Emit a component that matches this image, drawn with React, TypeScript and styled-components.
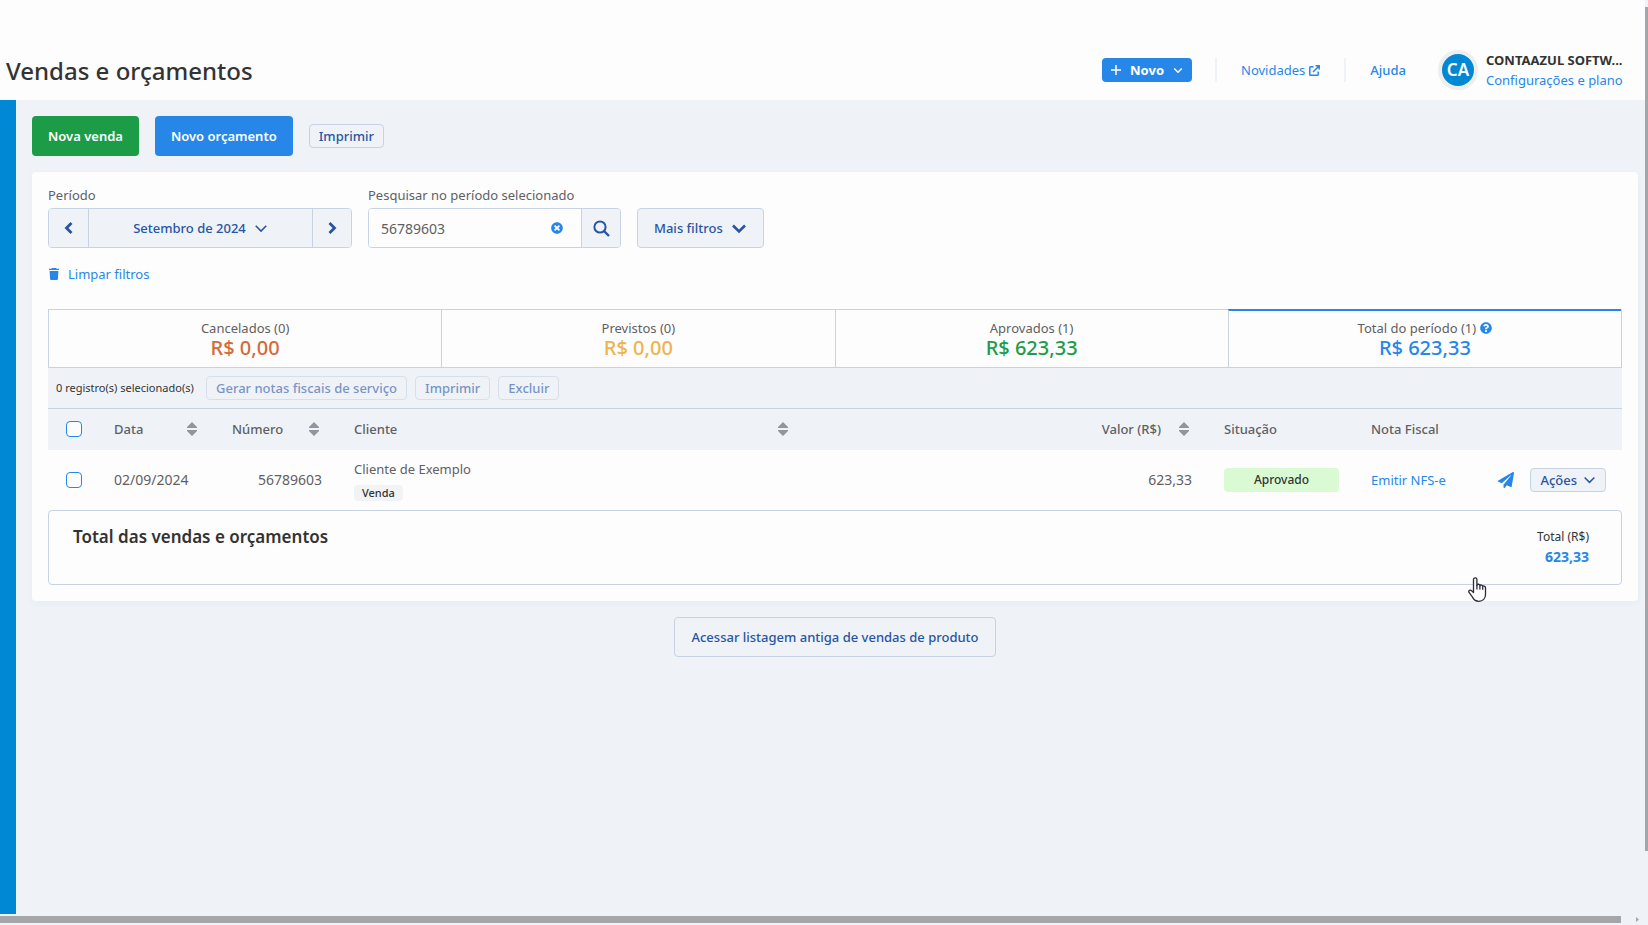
import React from 'react';
import styled, { createGlobalStyle, css } from 'styled-components';
import { FaPaperPlane, FaTimesCircle, FaQuestionCircle } from 'react-icons/fa';

const color = {
  surface: '#fdfdfd',
  page: '#eff3f8',
  border: '#c7d3e2',
  brand: '#0088d4',
  blue: '#2687e9',
  navy: '#2855a3',
  green: '#1d9c48',
  text: '#333333',
  muted: '#5f5f64',
};

const GlobalStyle = createGlobalStyle`
  *, *::before, *::after { box-sizing: border-box; }
  body {
    margin: 0;
    background: ${color.page};
    color: ${color.text};
    font: 400 13px/20px "Noto Sans", "Open Sans", sans-serif;
    overflow: hidden;
  }
  button, input { font: inherit; margin: 0; }
  button { cursor: pointer; }
  a { text-decoration: none; color: ${color.blue}; }
  h1, h2, p { margin: 0; }
  svg { display: block; flex: none; }
`;

/* ---------- Frame ---------- */

const Frame = styled.div`
  display: grid;
  grid-template: minmax(0, 1fr) 11px / minmax(0, 1fr) 3px;
  height: 100vh;
`;

const Screen = styled.div`
  display: flex;
  flex-direction: column;
  min-height: 0;
`;

const VerticalTrack = styled.div`
  display: flex;
  flex-direction: column;
  padding-top: 7px;
`;

const VerticalThumb = styled.div`
  height: 93%;
  background: #a4a6aa;
`;

const HorizontalTrack = styled.div`
  grid-column: 1 / -1;
  display: flex;
  align-items: center;
  justify-content: space-between;
  padding-right: 9px;
`;

const HorizontalThumb = styled.div`
  flex: 1;
  height: 7px;
  margin-right: 15px;
  background: #a4a6aa;
`;

/* ---------- Header ---------- */

const Header = styled.header`
  display: flex;
  align-items: flex-end;
  justify-content: space-between;
  height: 100px;
  padding: 0 17px 10px 6px;
  background: ${color.surface};
`;

const PageTitle = styled.h1`
  font-size: 24px;
  line-height: 38px;
  font-weight: 500;
`;

const HeaderNav = styled.nav`
  display: flex;
  align-items: center;
  height: 40px;
`;

const NewButton = styled.button`
  display: flex;
  align-items: center;
  gap: 9px;
  height: 24px;
  padding: 0 9px;
  border: 0;
  border-radius: 4px;
  background: ${color.blue};
  color: #fff;
  font-weight: 700;
`;

const HeaderItem = styled.div`
  display: flex;
  align-items: center;
  height: 24px;
  padding: 0 24px;
  border-left: 2px solid ${color.page};
`;

const HeaderLink = styled.a<{ $strong?: boolean }>`
  display: flex;
  align-items: center;
  gap: 4px;
  font-weight: ${(p) => (p.$strong ? 500 : 400)};
`;

const HeaderLinks = styled.div`
  display: flex;
  margin-left: 23px;
`;

const Account = styled.div`
  display: flex;
  align-items: center;
  gap: 8px;
  margin-left: 8px;
`;

const AccountText = styled.div`
  display: flex;
  flex-direction: column;
  width: 142px;
  line-height: 20px;
  white-space: nowrap;
`;

const AccountName = styled.strong`
  overflow: hidden;
  text-overflow: ellipsis;
  font-weight: 700;
`;

const Avatar = styled.div`
  display: grid;
  place-items: center;
  width: 40px;
  height: 40px;
  border: 4px solid #eeeeee;
  border-radius: 50%;
  background: ${color.brand};
  color: #fff;
  font-size: 17px;
  font-weight: 600;
`;

/* ---------- Body ---------- */

const Body = styled.div`
  display: flex;
  flex: 1;
  min-height: 0;
`;

const SideBar = styled.div`
  width: 16px;
  flex: none;
  background: ${color.brand};
`;

const Main = styled.main`
  display: flex;
  flex-direction: column;
  flex: 1;
  gap: 16px;
  min-width: 0;
  padding: 16px 7px 16px 16px;
`;

const ActionRow = styled.div`
  display: flex;
  align-items: center;
  gap: 16px;
`;

const Button = styled.button<{ $tone?: 'green' | 'blue' }>`
  display: inline-flex;
  align-items: center;
  justify-content: center;
  gap: 8px;
  height: 40px;
  padding: 0 16px;
  border: 1px solid ${color.border};
  border-radius: 4px;
  background: ${color.page};
  color: ${color.navy};
  font-weight: 500;
  white-space: nowrap;
  ${(p) =>
    p.$tone &&
    css`
      border: 0;
      background: ${color[p.$tone]};
      color: #fff;
      font-weight: 600;
    `}
`;

const SmallButton = styled(Button)`
  gap: 6px;
  height: 24px;
  padding: 0 9px;
  &:disabled {
    opacity: 0.6;
    cursor: default;
  }
`;

const Card = styled.section`
  padding: 16px;
  border-radius: 4px;
  background: ${color.surface};
  box-shadow: 0 2px 6px rgba(40, 85, 163, 0.04);
`;

/* ---------- Filters ---------- */

const Filters = styled.div`
  display: flex;
  align-items: flex-end;
  gap: 16px;
`;

const Field = styled.div`
  display: flex;
  flex-direction: column;
  color: ${color.muted};
  line-height: 14px;
  gap: 6px;
`;

const JoinedControl = styled.div`
  display: flex;
  height: 40px;
  border: 1px solid ${color.border};
  border-radius: 4px;
  overflow: hidden;
`;

const Segment = styled.button<{ $wide?: boolean }>`
  display: flex;
  align-items: center;
  justify-content: center;
  gap: 8px;
  width: ${(p) => (p.$wide ? 224 : 39)}px;
  padding: 0;
  border: 0;
  background: ${color.page};
  color: ${color.navy};
  font-weight: 500;
  & + &, input ~ &:last-child {
    border-left: 1px solid ${color.border};
  }
`;

const SearchInput = styled.input`
  width: 172px;
  padding: 0 0 0 12px;
  border: 0;
  outline: 0;
  background: ${color.surface};
  color: ${color.muted};
  font-size: 14px;
`;

const ClearButton = styled.button`
  display: grid;
  place-items: center;
  width: 40px;
  padding: 0 8px 0 0;
  border: 0;
  background: ${color.surface};
  color: ${color.blue};
`;

const ClearFilters = styled.a`
  display: inline-flex;
  align-items: center;
  gap: 8px;
  margin: 16px 0 25px;
`;

/* ---------- Totals tabs ---------- */

const Tabs = styled.div`
  display: grid;
  grid-template-columns: repeat(4, 1fr);
  border: solid ${color.border};
  border-width: 0 1px 1px 0;
`;

const Tab = styled.button<{ $active?: boolean }>`
  display: flex;
  flex-direction: column;
  align-items: center;
  justify-content: center;
  height: 58px;
  padding: ${(p) => (p.$active ? 0 : 1)}px 0 0;
  border: solid ${color.border};
  border-width: 1px 0 0 1px;
  background: ${color.surface};
  ${(p) =>
    p.$active &&
    css`
      border-top: 2px solid ${color.blue};
    `}
`;

const TabLabel = styled.span`
  display: flex;
  align-items: center;
  gap: 4px;
  color: ${color.muted};
  line-height: 18px;
`;

const TabValue = styled.span<{ $color: string }>`
  color: ${(p) => p.$color};
  font-size: 20px;
  line-height: 22px;
  font-weight: 500;
`;

const BulkBar = styled.div`
  display: flex;
  align-items: center;
  gap: 8px;
  height: 40px;
  padding: 0 8px;
  background: ${color.page};
`;

const BulkCount = styled.span`
  width: 142px;
  font-size: 11px;
  white-space: nowrap;
`;

/* ---------- Table ---------- */

const Table = styled.table`
  width: 100%;
  table-layout: fixed;
  border-collapse: collapse;
`;

const Col = styled.col<{ $width?: number }>`
  width: ${(p) => (p.$width ? `${p.$width}px` : 'auto')};
`;

const Th = styled.th`
  height: 41px;
  padding: 0 16px;
  border-top: 1px solid ${color.border};
  background: ${color.page};
  color: ${color.muted};
  font-weight: 500;
  text-align: left;
  white-space: nowrap;
`;

const Td = styled.td<{ $numeric?: boolean }>`
  height: 60px;
  padding: 0 16px;
  color: ${color.muted};
  ${(p) =>
    p.$numeric &&
    css`
      font-size: 14px;
      text-align: right;
    `}
`;

const DateText = styled.time`
  font-size: 14px;
`;

const HeadCell = styled.div<{ $end?: boolean }>`
  display: flex;
  align-items: center;
  justify-content: ${(p) => (p.$end ? 'flex-end' : 'space-between')};
  gap: 18px;
  padding-right: 3px;
`;

const SortButton = styled.button`
  padding: 0;
  border: 0;
  background: none;
  color: #94949f;
`;

const Checkbox = styled.input`
  display: block;
  appearance: none;
  width: 16px;
  height: 16px;
  margin: 0 0 0 2px;
  border: 1px solid ${color.blue};
  border-radius: 4px;
  background: ${color.surface};
`;

const ClientCell = styled.div`
  display: flex;
  flex-direction: column;
  align-items: flex-start;
  gap: 6px;
`;

const KindTag = styled.span`
  padding: 0 8px;
  border-radius: 4px;
  background: #f2f3f5;
  color: ${color.text};
  font-size: 11px;
  line-height: 16px;
  font-weight: 500;
`;

const StatusTag = styled.span`
  display: block;
  border-radius: 4px;
  background: #d9fad3;
  color: ${color.text};
  font-size: 12px;
  line-height: 24px;
  font-weight: 500;
  text-align: center;
`;

const RowActions = styled.div`
  display: flex;
  align-items: center;
  justify-content: flex-end;
  gap: 16px;
`;

const IconLink = styled.a`
  display: block;
`;

const Summary = styled.div`
  display: flex;
  justify-content: space-between;
  align-items: flex-start;
  height: 75px;
  padding: 16px 32px 0 24px;
  border: 1px solid ${color.border};
  border-radius: 4px;
`;

const SummaryTitle = styled.h2`
  font-size: 17px;
  line-height: 20px;
  font-weight: 600;
`;

const SummaryTotal = styled.p`
  display: flex;
  flex-direction: column;
  font-size: 12px;
  line-height: 20px;
  text-align: right;
`;

const SummaryValue = styled.strong`
  color: ${color.blue};
  font-size: 14px;
`;

const Footer = styled.div`
  display: flex;
  justify-content: center;
`;

const Pointer = styled.svg`
  position: absolute;
  left: 1468px;
  top: 577px;
  pointer-events: none;
`;

/* ---------- Icons ---------- */

type ChevronProps = { dir: 'left' | 'right' | 'down'; size?: number; weight?: number };

const chevronPath = {
  left: 'M10.5 3 5.5 8l5 5',
  right: 'M5.5 3l5 5-5 5',
  down: 'M2 5.5l6 6 6-6',
};

const Chevron = ({ dir, size = 14, weight = 1.8 }: ChevronProps) => (
  <svg width={size} height={size} viewBox="0 0 16 16" fill="none" stroke="currentColor" strokeWidth={weight}>
    <path d={chevronPath[dir]} />
  </svg>
);

const PlusIcon = () => (
  <svg width="10" height="10" viewBox="0 0 10 10" stroke="currentColor" strokeWidth="1.5">
    <path d="M5 0v10M0 5h10" />
  </svg>
);

const ExternalIcon = () => (
  <svg width="11" height="11" viewBox="0 0 11 11" fill="none" stroke="currentColor" strokeWidth="1.5">
    <path d="M4.5 1.8H1.6a.8.8 0 0 0-.8.8v6.8c0 .4.4.8.8.8h6.8c.4 0 .8-.4.8-.8V6.5M6.5.8h3.7v3.7M10 1 4 7" />
  </svg>
);

const SearchIcon = () => (
  <svg width="17" height="17" viewBox="0 0 17 17" fill="none" stroke="currentColor" strokeWidth="2">
    <circle cx="7" cy="7" r="5.6" />
    <path d="M11 11l5 5" strokeWidth="2.4" />
  </svg>
);

const TrashIcon = () => (
  <svg width="12" height="12" viewBox="0 0 12 12" fill="currentColor">
    <path d="M4 0h4l.6.8H11V2H1V.8h2.4zM1.6 3h8.8l-.5 8.1c0 .5-.4.9-.9.9H3c-.5 0-.9-.4-.9-.9z" />
  </svg>
);

const SortIcon = () => (
  <svg width="10" height="14" viewBox="0 0 10 14" fill="currentColor">
    <path d="M5 0l5 5v1H0V5zM0 8h10v1l-5 5-5-5z" />
  </svg>
);

const HandPointer = () => (
  <Pointer width="19" height="25" viewBox="0 0 19 25" fill="#fff" stroke="#2c2a3a" strokeWidth="1.3" strokeLinejoin="round">
    <path d="M5.5 15.5V2.6c0-2.2 3.4-2.2 3.4 0v5.6c.3-1.5 3-1.2 3 .5.4-1.2 2.8-.8 2.8.8.5-1 2.8-.7 2.8 1.2v6.8c0 4-2.7 6.8-6.6 6.8-3.3 0-5-1.4-6.4-4.2L.9 15.2c-.6-1.6 1.3-2.8 2.7-1.4z" />
    <path d="M8.9 8v4.5M11.9 8.7v3.8M14.7 9.5v3.2" fill="none" />
  </Pointer>
);

/* ---------- Page ---------- */

const totals = [
  { label: 'Cancelados (0)', value: 'R$ 0,00', tint: '#d26a3a' },
  { label: 'Previstos (0)', value: 'R$ 0,00', tint: '#edb44c' },
  { label: 'Aprovados (1)', value: 'R$ 623,33', tint: color.green },
  { label: 'Total do período (1)', value: 'R$ 623,33', tint: color.blue, active: true },
];

const Sort = ({ by }: { by: string }) => (
  <SortButton type="button" aria-label={`Ordenar por ${by}`}>
    <SortIcon />
  </SortButton>
);

export default function App() {
  return (
    <Frame>
      <GlobalStyle />
      <Screen>
        <Header>
          <PageTitle>Vendas e orçamentos</PageTitle>
          <HeaderNav>
            <NewButton type="button">
              <PlusIcon />
              Novo
              <Chevron dir="down" size={10} weight={2.4} />
            </NewButton>
            <HeaderLinks>
              <HeaderItem>
                <HeaderLink href="#novidades">
                  Novidades
                  <ExternalIcon />
                </HeaderLink>
              </HeaderItem>
              <HeaderItem>
                <HeaderLink href="#ajuda" $strong>
                  Ajuda
                </HeaderLink>
              </HeaderItem>
            </HeaderLinks>
            <Account>
              <Avatar>CA</Avatar>
              <AccountText>
                <AccountName>CONTAAZUL SOFTW...</AccountName>
                <a href="#plano">Configurações e plano</a>
              </AccountText>
            </Account>
          </HeaderNav>
        </Header>

        <Body>
          <SideBar />
          <Main>
            <ActionRow>
              <Button type="button" $tone="green">Nova venda</Button>
              <Button type="button" $tone="blue">Novo orçamento</Button>
              <SmallButton type="button">Imprimir</SmallButton>
            </ActionRow>

            <Card>
              <Filters>
                <Field>
                  <span id="period">Período</span>
                  <JoinedControl role="group" aria-labelledby="period">
                    <Segment type="button" aria-label="Mês anterior">
                      <Chevron dir="left" size={16} weight={2.8} />
                    </Segment>
                    <Segment type="button" $wide>
                      Setembro de 2024
                      <Chevron dir="down" />
                    </Segment>
                    <Segment type="button" aria-label="Próximo mês">
                      <Chevron dir="right" size={16} weight={2.8} />
                    </Segment>
                  </JoinedControl>
                </Field>
                <Field>
                  <label htmlFor="search">Pesquisar no período selecionado</label>
                  <JoinedControl>
                    <SearchInput id="search" type="text" defaultValue="56789603" />
                    <ClearButton type="button" aria-label="Limpar pesquisa">
                      <FaTimesCircle size={12} />
                    </ClearButton>
                    <Segment type="button" aria-label="Pesquisar">
                      <SearchIcon />
                    </Segment>
                  </JoinedControl>
                </Field>
                <Button type="button">
                  Mais filtros
                  <Chevron dir="down" size={16} weight={2.6} />
                </Button>
              </Filters>

              <ClearFilters href="#limpar">
                <TrashIcon />
                Limpar filtros
              </ClearFilters>

              <Tabs>
                {totals.map((t) => (
                  <Tab key={t.label} type="button" $active={t.active}>
                    <TabLabel>
                      {t.label}
                      {t.active && <FaQuestionCircle size={12} color={color.blue} />}
                    </TabLabel>
                    <TabValue $color={t.tint}>{t.value}</TabValue>
                  </Tab>
                ))}
              </Tabs>

              <BulkBar>
                <BulkCount>0 registro(s) selecionado(s)</BulkCount>
                <SmallButton type="button" disabled>Gerar notas fiscais de serviço</SmallButton>
                <SmallButton type="button" disabled>Imprimir</SmallButton>
                <SmallButton type="button" disabled>Excluir</SmallButton>
              </BulkBar>

              <Table>
                <colgroup>
                  <Col $width={50} />
                  <Col $width={118} />
                  <Col $width={122} />
                  <Col $width={469} />
                  <Col />
                  <Col $width={147} />
                  <Col $width={112} />
                  <Col $width={155} />
                </colgroup>
                <thead>
                  <tr>
                    <Th><Checkbox type="checkbox" aria-label="Selecionar todos" /></Th>
                    <Th><HeadCell>Data<Sort by="data" /></HeadCell></Th>
                    <Th><HeadCell>Número<Sort by="número" /></HeadCell></Th>
                    <Th><HeadCell>Cliente<Sort by="cliente" /></HeadCell></Th>
                    <Th><HeadCell $end>Valor (R$)<Sort by="valor" /></HeadCell></Th>
                    <Th>Situação</Th>
                    <Th>Nota Fiscal</Th>
                    <Th />
                  </tr>
                </thead>
                <tbody>
                  <tr>
                    <Td><Checkbox type="checkbox" aria-label="Selecionar venda 56789603" /></Td>
                    <Td><DateText>02/09/2024</DateText></Td>
                    <Td $numeric>56789603</Td>
                    <Td>
                      <ClientCell>
                        Cliente de Exemplo
                        <KindTag>Venda</KindTag>
                      </ClientCell>
                    </Td>
                    <Td $numeric>623,33</Td>
                    <Td><StatusTag>Aprovado</StatusTag></Td>
                    <Td><a href="#nfse">Emitir NFS-e</a></Td>
                    <Td>
                      <RowActions>
                        <IconLink href="#enviar" aria-label="Enviar venda">
                          <FaPaperPlane size={16} />
                        </IconLink>
                        <SmallButton type="button">
                          Ações
                          <Chevron dir="down" size={13} />
                        </SmallButton>
                      </RowActions>
                    </Td>
                  </tr>
                </tbody>
              </Table>

              <Summary>
                <SummaryTitle>Total das vendas e orçamentos</SummaryTitle>
                <SummaryTotal>
                  Total (R$)
                  <SummaryValue>623,33</SummaryValue>
                </SummaryTotal>
              </Summary>
            </Card>

            <Footer>
              <Button type="button">Acessar listagem antiga de vendas de produto</Button>
            </Footer>
          </Main>
        </Body>
      </Screen>

      <VerticalTrack>
        <VerticalThumb />
      </VerticalTrack>
      <HorizontalTrack>
        <HorizontalThumb />
        <svg width="3" height="5" viewBox="0 0 3 5" fill="#a4a6aa">
          <path d="M0 0l3 2.5L0 5z" />
        </svg>
      </HorizontalTrack>
      <HandPointer />
    </Frame>
  );
}
